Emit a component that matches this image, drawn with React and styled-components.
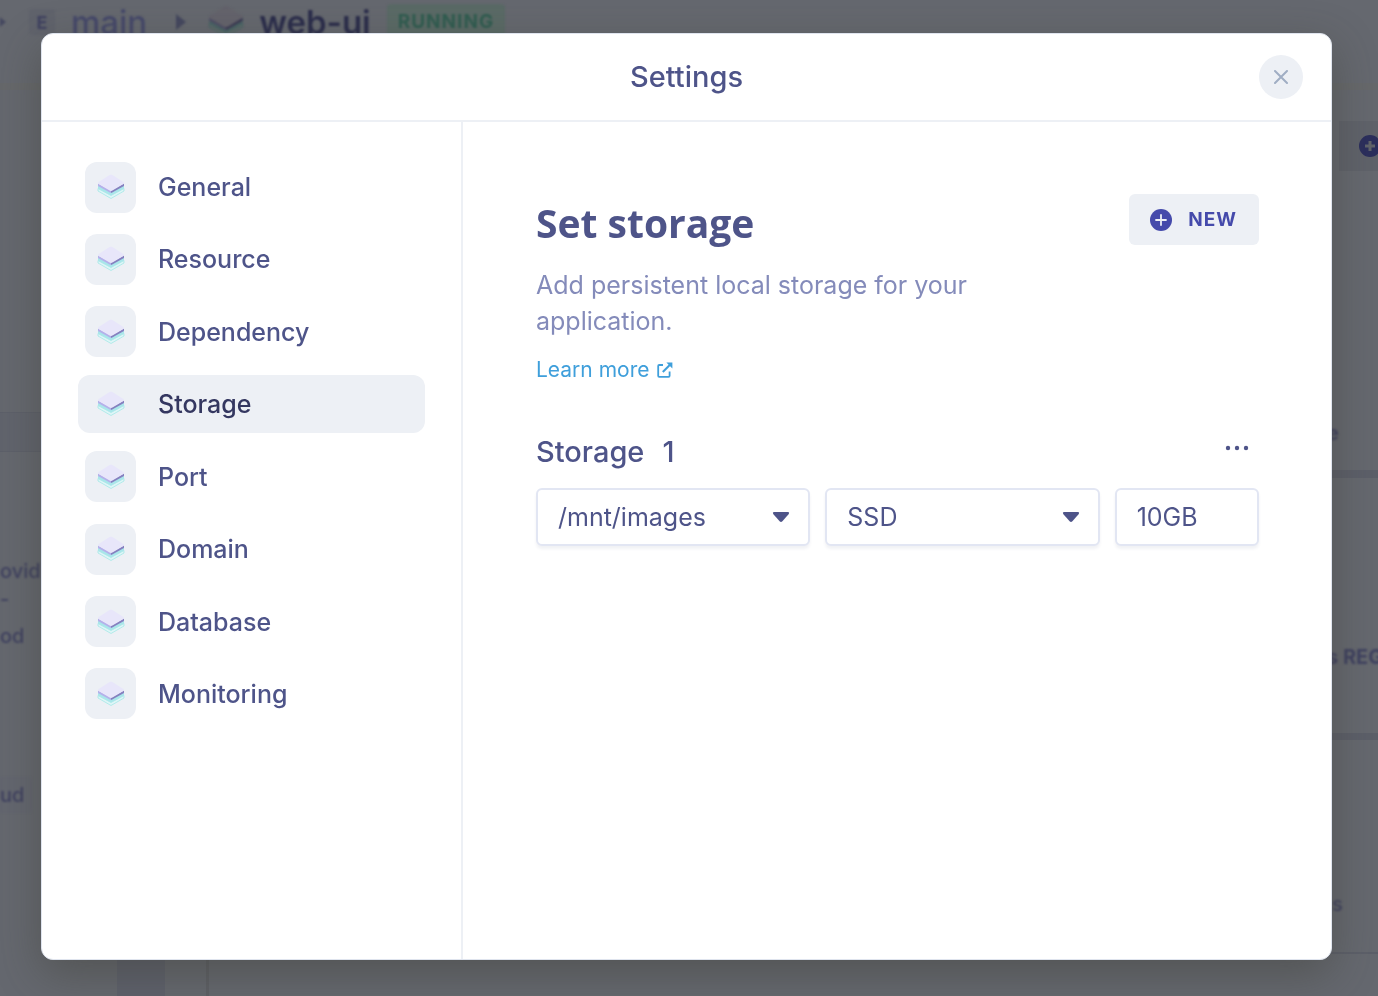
import React from "react";
import styled, { createGlobalStyle, css } from "styled-components";

const GlobalStyle = createGlobalStyle`
  *, *::before, *::after { box-sizing: border-box; }
  body {
    margin: 0;
    font-family: Inter, "Liberation Sans", sans-serif;
    color: #4e5489;
    background: #65686f;
  }
  h1, h2, h3, p, ul { margin: 0; padding: 0; }
  ul { list-style: none; }
  button, input, select { font: inherit; color: inherit; }
`;

/* ---------- dimmed page behind the dialog ---------- */

const Page = styled.div`
  display: flex;
  flex-direction: column;
  height: 100vh;
  overflow: hidden;
  background: #65686f;
  color: #3f4160;
`;

const TopBar = styled.header`
  display: flex;
  flex: none;
  height: 90px;
  border-bottom: 7px solid #66686b;
  overflow: hidden;
`;

const Crumbs = styled.div`
  display: flex;
  align-items: center;
  height: 44px;
  font-size: 33px;
  font-weight: 500;
  filter: blur(1px);
`;

const CrumbArrow = styled.svg`
  width: ${(p) => (p.$first ? "6px" : "10px")};
  height: 16px;
  fill: #44475f;
`;

const CrumbBadge = styled.span`
  display: grid;
  place-items: center;
  width: 26px;
  height: 26px;
  margin: 0 16px 0 23px;
  border-radius: 4px;
  background: #60636c;
  font-size: 18px;
  font-weight: 700;
`;

const CrumbName = styled.span`
  color: ${(p) => (p.$current ? "#2a2c4b" : "#45486a")};
  font-weight: ${(p) => (p.$current ? 600 : 500)};
  margin-right: ${(p) => (p.$current ? "16px" : "29px")};
`;

const CrumbIcon = styled.span`
  display: flex;
  margin: 0 15px 0 22px;
  filter: brightness(0.43);
`;

const Status = styled.span`
  padding: 0 11px;
  border-radius: 4px;
  background: #5a6a66;
  color: #2f5c50;
  font-size: 19px;
  font-weight: 700;
  line-height: 36px;
  letter-spacing: 1px;
`;

const PageBody = styled.div`
  display: flex;
  flex: 1;
  justify-content: space-between;
  min-height: 0;
  font-size: 20px;
  font-weight: 500;
`;

const LeftRail = styled.div`
  display: flex;
  flex-direction: column;
  width: 117px;
  padding-top: 322px;
`;

const RailBand = styled.div`
  flex: none;
  height: 40px;
  margin-bottom: 108px;
  border-top: 1px solid #5d606a;
  border-bottom: 1px solid #5d606a;
  background: #61646d;
`;

const RailText = styled.span`
  line-height: 22px;
  margin-bottom: ${(p) => p.$after}px;
  filter: blur(1px);
`;

const RailChip = styled.span`
  width: 32px;
  line-height: 36px;
  border-radius: 0 4px 4px 0;
  background: #63666f;
  filter: blur(1px);
`;

const CenterColumn = styled.div`
  flex: 1;
  border-left: 48px solid #5e616c;
`;

const CenterRule = styled.div`
  width: 44px;
  height: 100%;
  border-right: 3px solid #5e6066;
`;

const RightRail = styled.div`
  display: flex;
  flex-direction: column;
  width: 51px;
  padding-top: 31px;
  white-space: nowrap;
`;

const RailAction = styled.div`
  display: flex;
  align-items: center;
  flex: none;
  height: 50px;
  margin: 0 0 249px 12px;
  padding-left: 19px;
  background: #5f626a;
  color: #2b2e5c;
  svg { flex: none; }
`;

const RailRow = styled.div`
  flex: none;
  height: ${(p) => p.$height}px;
  padding-left: ${(p) => (p.$strong ? 0 : 5)}px;
  line-height: 26px;
  border-bottom: ${(p) => p.$rule}px solid #5c5f69;
  font-weight: ${(p) => (p.$strong ? 700 : 500)};
  span { filter: blur(1px); }
`;

/* ---------- dialog ---------- */

const Overlay = styled.div`
  position: fixed;
  inset: 0;
  display: grid;
  padding: 33px 46px 36px 41px;
`;

const Dialog = styled.section`
  display: flex;
  flex-direction: column;
  min-width: 0;
  min-height: 0;
  overflow: hidden;
  border: 1px solid #dfe4ee;
  border-radius: 12px;
  background: #fff;
  box-shadow: 0 14px 44px rgba(60, 60, 50, 0.45);
`;

const DialogHeader = styled.header`
  display: grid;
  grid-template-columns: 1fr auto 1fr;
  align-items: center;
  flex: none;
  height: 88px;
  padding: 0 28px;
  border-bottom: 2px solid #edf0f5;
`;

const DialogTitle = styled.h1`
  grid-column: 2;
  font-size: 29px;
  font-weight: 500;
  line-height: 36px;
`;

const CloseButton = styled.button`
  display: grid;
  place-items: center;
  justify-self: end;
  width: 44px;
  height: 44px;
  padding: 0;
  border: 0;
  border-radius: 50%;
  background: #edf0f5;
  color: #a0aec4;
  cursor: pointer;
`;

const DialogBody = styled.div`
  display: flex;
  flex: 1;
  min-height: 0;
`;

const Sidebar = styled.nav`
  flex: none;
  width: 421px;
  padding: 36px 36px 0;
  border-right: 2px solid #edf0f5;
`;

const NavList = styled.ul`
  display: flex;
  flex-direction: column;
  justify-content: space-between;
  height: 565px;
`;

const NavTile = styled.span`
  display: grid;
  place-items: center;
  width: 51px;
  height: 51px;
  border-radius: 12px;
  background: #edf0f5;
`;

const NavButton = styled.button`
  display: flex;
  align-items: center;
  gap: 22px;
  width: 100%;
  height: 58px;
  padding: 0 7px;
  border: 0;
  border-radius: 12px;
  background: transparent;
  font-size: 25px;
  font-weight: 500;
  text-align: left;
  cursor: pointer;
  ${(p) =>
    p.$active &&
    css`
      background: #edf0f5;
      color: #343760;
    `}
`;

const Content = styled.main`
  flex: 1;
  min-width: 0;
  padding: 72px 72px 0 73px;
`;

const Intro = styled.div`
  display: flex;
  align-items: flex-start;
  justify-content: space-between;
`;

const Heading = styled.h2`
  font-family: "Open Sans", sans-serif;
  font-size: 39px;
  font-weight: 700;
  line-height: 58px;
`;

const NewButton = styled.button`
  display: flex;
  align-items: center;
  gap: 16px;
  height: 51px;
  padding: 0 22px 0 21px;
  border: 0;
  border-radius: 6px;
  background: #edf0f5;
  color: #454aab;
  font-size: 19px;
  font-weight: 700;
  letter-spacing: 1px;
  cursor: pointer;
`;

const Description = styled.p`
  max-width: 480px;
  margin-top: 15px;
  color: #848bba;
  font-size: 25px;
  line-height: 36px;
`;

const LearnMore = styled.a`
  display: inline-flex;
  align-items: center;
  gap: 8px;
  margin-top: 17px;
  color: #3f9fdb;
  font-size: 21px;
  line-height: 28px;
  text-decoration: none;
`;

const GroupHeader = styled.div`
  display: flex;
  justify-content: space-between;
  margin: 50px 0 18px;
`;

const GroupTitle = styled.h3`
  font-size: 29px;
  font-weight: 500;
  line-height: 36px;
  span { margin-left: 18px; }
`;

const MoreButton = styled.button`
  display: grid;
  place-items: center;
  width: 44px;
  height: 28px;
  padding: 0;
  border: 0;
  background: transparent;
  cursor: pointer;
`;

const Fields = styled.div`
  display: grid;
  grid-template-columns: 19fr 19fr 10fr;
  gap: 15px;
`;

const SelectBox = styled.div`
  display: grid;
  align-items: center;
  > * { grid-area: 1 / 1; }
  svg {
    justify-self: end;
    margin-right: 20px;
    pointer-events: none;
  }
`;

const fieldStyle = css`
  width: 100%;
  height: 58px;
  padding: 0 20px;
  border: 2px solid #e2e6f3;
  border-radius: 6px;
  background: #fff;
  box-shadow: 0 3px 3px rgba(60, 70, 110, 0.07);
  color: #4e5489;
  font-size: 25px;
  outline: none;
`;

const Select = styled.select`
  ${fieldStyle}
  appearance: none;
`;

const SizeInput = styled.input`
  ${fieldStyle}
`;

/* ---------- icons ---------- */

const LayersIcon = ({ size = 28 }) => (
  <svg width={size} height={size} viewBox="0 0 28 28" aria-hidden="true">
    <path d="M1 15.5 L14 22.5 L27 15.5 V18 L14 25.5 L1 18 Z" fill="#dff5f7" stroke="#9be6e4" strokeWidth="0.7" />
    <path d="M1 12 L14 19 L27 12 V15.5 L14 22.5 L1 15.5 Z" fill="#a9e6ea" />
    <path d="M1 10.5 L14 17.5 V20 Q13.4 20 12.8 19.6 L1 13 Z" fill="#b5b0ea" />
    <path d="M27 10.5 L14 17.5 V20 Q14.6 20 15.2 19.6 L27 13 Z" fill="#8580bf" />
    <path d="M12.6 1.9 Q14 1.2 15.4 1.9 L26.4 8.9 Q27.6 10.3 26.4 11.1 L15.4 17.6 Q14 18.3 12.6 17.6 L1.6 11.1 Q0.4 10.3 1.6 8.9 Z" fill="#e8e6fa" />
  </svg>
);

const PlusCircle = () => (
  <svg width="22" height="22" viewBox="0 0 22 22" aria-hidden="true">
    <circle cx="11" cy="11" r="11" fill="currentColor" />
    <path d="M11 6v10M6 11h10" stroke="#edf0f5" strokeWidth="1.8" strokeLinecap="round" />
  </svg>
);

const DimPlus = () => (
  <svg width="24" height="24" viewBox="0 0 24 24" aria-hidden="true">
    <circle cx="12" cy="12" r="11" fill="currentColor" />
    <path d="M12 7v10M7 12h10" stroke="#5f626a" strokeWidth="3" />
  </svg>
);

const CloseIcon = () => (
  <svg width="14" height="14" viewBox="0 0 14 14" fill="none" stroke="currentColor" strokeWidth="2" strokeLinecap="round" aria-hidden="true">
    <path d="M1 1l12 12M13 1L1 13" />
  </svg>
);

const ExternalIcon = () => (
  <svg width="16" height="16" viewBox="0 0 16 16" fill="none" stroke="currentColor" strokeWidth="1.8" aria-hidden="true">
    <path d="M6 3H2.2Q1.2 3 1.2 4V13.8Q1.2 14.8 2.2 14.8H11.6Q12.6 14.8 12.6 13.8V9.6" />
    <path d="M5.8 10L13 2.8" strokeWidth="2" />
    <path d="M9.4 0.6H15.4V6.6Z" fill="currentColor" stroke="none" />
  </svg>
);

const Caret = () => (
  <svg width="18" height="12" viewBox="0 0 18 12" aria-hidden="true">
    <path d="M2 1H16Q17.8 1.2 16.8 2.9L10.4 10.2Q9 11.6 7.6 10.2L1.2 2.9Q0.2 1.2 2 1Z" fill="#4e5489" />
  </svg>
);

const Dots = () => (
  <svg width="24" height="6" viewBox="0 0 24 6" fill="#4e5489" aria-hidden="true">
    <circle cx="3" cy="3" r="2.2" />
    <circle cx="12" cy="3" r="2.2" />
    <circle cx="21" cy="3" r="2.2" />
  </svg>
);

const Arrow = ({ first }) => (
  <CrumbArrow $first={first} viewBox={first ? "4 0 6 16" : "0 0 10 16"} aria-hidden="true">
    <path d="M0 0L10 8L0 16Z" />
  </CrumbArrow>
);

const sections = ["General", "Resource", "Dependency", "Storage", "Port", "Domain", "Database", "Monitoring"];

export default function App() {
  return (
    <>
      <GlobalStyle />
      <Page aria-hidden="true">
        <TopBar>
          <Crumbs>
            <Arrow first />
            <CrumbBadge>E</CrumbBadge>
            <CrumbName>main</CrumbName>
            <Arrow />
            <CrumbIcon><LayersIcon size={36} /></CrumbIcon>
            <CrumbName $current>web-ui</CrumbName>
            <Status>RUNNING</Status>
          </Crumbs>
        </TopBar>
        <PageBody>
          <LeftRail>
            <RailBand />
            <RailText $after={6}>ovid</RailText>
            <RailText $after={15}>-</RailText>
            <RailText $after={130}>od</RailText>
            <RailChip>ud</RailChip>
          </LeftRail>
          <CenterColumn><CenterRule /></CenterColumn>
          <RightRail>
            <RailAction><DimPlus /></RailAction>
            <RailRow $height={58} $rule={8} $strong><span>e</span></RailRow>
            <RailRow $height={166} $rule={0} />
            <RailRow $height={96} $rule={7} $strong><span>s REG</span></RailRow>
            <RailRow $height={151} $rule={0} />
            <RailRow $height={63} $rule={2}><span>s</span></RailRow>
          </RightRail>
        </PageBody>
      </Page>

      <Overlay>
        <Dialog role="dialog" aria-modal="true" aria-labelledby="dialog-title">
          <DialogHeader>
            <DialogTitle id="dialog-title">Settings</DialogTitle>
            <CloseButton type="button" aria-label="Close"><CloseIcon /></CloseButton>
          </DialogHeader>
          <DialogBody>
            <Sidebar aria-label="Settings sections">
              <NavList>
                {sections.map((name) => (
                  <li key={name}>
                    <NavButton type="button" $active={name === "Storage"} aria-current={name === "Storage" ? "page" : undefined}>
                      <NavTile><LayersIcon /></NavTile>
                      {name}
                    </NavButton>
                  </li>
                ))}
              </NavList>
            </Sidebar>
            <Content>
              <Intro>
                <Heading>Set storage</Heading>
                <NewButton type="button"><PlusCircle />NEW</NewButton>
              </Intro>
              <Description>Add persistent local storage for your application.</Description>
              <LearnMore href="#learn-more">Learn more<ExternalIcon /></LearnMore>
              <GroupHeader>
                <GroupTitle>Storage<span>1</span></GroupTitle>
                <MoreButton type="button" aria-label="Storage options"><Dots /></MoreButton>
              </GroupHeader>
              <Fields>
                <SelectBox>
                  <Select aria-label="Mount path" defaultValue="/mnt/images">
                    <option>/mnt/images</option>
                  </Select>
                  <Caret />
                </SelectBox>
                <SelectBox>
                  <Select aria-label="Disk type" defaultValue="SSD">
                    <option>SSD</option>
                  </Select>
                  <Caret />
                </SelectBox>
                <SizeInput aria-label="Size" defaultValue="10GB" />
              </Fields>
            </Content>
          </DialogBody>
        </Dialog>
      </Overlay>
    </>
  );
}
